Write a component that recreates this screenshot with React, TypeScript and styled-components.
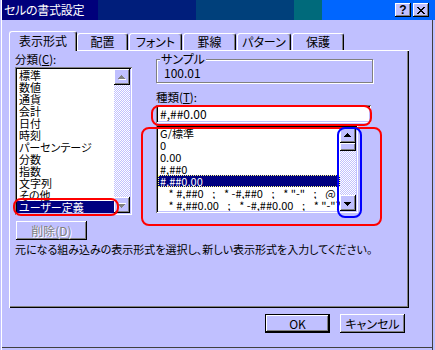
import styled, { createGlobalStyle, css } from 'styled-components';

const face = '#c0c0ff';
const shadow = '#808080';
const navy = '#000080';

const GlobalStyle = createGlobalStyle`
  html, body { margin: 0; padding: 0; background: ${face}; }
  body {
    font-family: "Noto Sans CJK JP", "Noto Sans", sans-serif;
    font-size: 12px;
    font-feature-settings: "palt";
    color: #000;
  }
`;

const raised = css`
  box-shadow: inset -1px -1px #000, inset 1px 1px #fff, inset -2px -2px ${shadow}, inset 2px 2px ${face};
`;

const sunken = css`
  box-shadow: inset 1px 1px ${shadow}, inset -1px -1px #fff, inset 2px 2px #000, inset -2px -2px ${face};
`;

const Window = styled.div`
  position: relative;
  width: 435px;
  height: 350px;
  box-sizing: border-box;
  padding-left: 2px;
  background: ${face};
  display: flex;
  flex-direction: column;
  overflow: hidden;
  box-shadow: inset 1px 0 ${face}, inset 2px 0 #fff, inset -2px 0 ${face}, inset -3px 0 #404040,
    inset 0 -2px ${face}, inset 0 -3px #404040;
`;

const TitleBar = styled.div`
  height: 20px;
  display: flex;
  align-items: center;
  padding: 0 6px 0 2px;
  color: #fff;
  background: linear-gradient(
    to right,
    #00007b 0 96px,
    #001e7b 96px 194px,
    #00407b 194px 292px,
    #006a7b 292px 320px,
    #0066ff 320px
  );
`;

const TitleText = styled.span`
  flex: 1;
  font-size: 12px;
  line-height: 20px;
  letter-spacing: -0.3px;
`;

const CaptionButton = styled.button`
  width: 16px;
  height: 14px;
  margin-left: 2px;
  padding: 0;
  border: none;
  background: ${face};
  ${raised};
  display: flex;
  align-items: center;
  justify-content: center;
  font-family: "Liberation Sans", sans-serif;
  font-weight: bold;
  font-size: 12px;
  line-height: 12px;
  color: #000;
`;

const Body = styled.div`
  display: flex;
  flex-direction: column;
  padding: 11px 0 0 7px;
`;

const TabRow = styled.div`
  display: flex;
  align-items: flex-end;
  gap: 1px;
  height: 19px;
`;

const Tab = styled.div<{ $w: number; $active?: boolean }>`
  position: relative;
  width: ${(p) => p.$w}px;
  height: ${(p) => (p.$active ? 20 : 17)}px;
  margin-bottom: ${(p) => (p.$active ? -1 : 0)}px;
  margin-right: ${(p) => (p.$active ? -1 : 0)}px;
  z-index: ${(p) => (p.$active ? 1 : 0)};
  box-sizing: border-box;
  background: ${face};
  border-top: 1px solid #fff;
  border-left: 1px solid #fff;
  border-right: 1px solid #000;
  border-radius: 3px 3px 0 0;
  box-shadow: inset -1px 0 ${shadow};
  text-align: center;
  font-size: 12px;
  line-height: ${(p) => (p.$active ? 17 : 15)}px;
`;

const Panel = styled.div`
  width: 400px;
  height: 258px;
  box-sizing: border-box;
  border-top: 1px solid #fff;
  border-left: 1px solid #fff;
  box-shadow: inset -1px -1px #000, inset -2px -2px ${shadow};
  padding: 2px 0 0 5px;
  display: flex;
  flex-direction: column;
`;

const Columns = styled.div`
  display: flex;
  gap: 24px;
`;

const Column = styled.div<{ $w: number }>`
  width: ${(p) => p.$w}px;
  display: flex;
  flex-direction: column;
  align-items: flex-start;
`;

const FieldLabel = styled.div<{ $mt?: number }>`
  height: 14px;
  margin-top: ${(p) => p.$mt ?? 0}px;
  line-height: 13px;
  font-size: 11.5px;
  u { text-underline-offset: 1px; }
`;

const ListBox = styled.div<{ $w: number; $h: number }>`
  width: ${(p) => p.$w}px;
  height: ${(p) => p.$h}px;
  box-sizing: border-box;
  padding: 2px;
  background: #fff;
  ${sunken};
  display: flex;
`;

const Rows = styled.div`
  flex: 1;
  min-width: 0;
  display: flex;
  flex-direction: column;
  overflow: hidden;
`;

const Row = styled.div<{ $selected?: boolean; $focus?: boolean }>`
  height: 12px;
  flex: none;
  line-height: 12px;
  font-size: 11px;
  padding-left: 2px;
  white-space: pre;
  overflow: hidden;
  background: ${(p) => (p.$selected ? navy : 'transparent')};
  color: ${(p) => (p.$selected ? '#fff' : '#000')};
  ${(p) =>
    p.$focus &&
    css`
      outline: 1px dotted #ffff80;
      outline-offset: -1px;
    `}
`;

const ScrollBar = styled.div`
  width: 16px;
  display: flex;
  flex-direction: column;
  background: repeating-conic-gradient(#fff 0 25%, ${face} 0 50%) 0 0 / 2px 2px;
`;

const ScrollButton = styled.div`
  width: 16px;
  height: 16px;
  flex: none;
  background: ${face};
  ${raised};
  display: flex;
  align-items: center;
  justify-content: center;
`;

const Thumb = styled.div<{ $h: number }>`
  width: 16px;
  height: ${(p) => p.$h}px;
  background: ${face};
  ${raised};
`;

const Track = styled.div`
  flex: 1;
`;

const PushButton = styled.button<{ $w: number; $default?: boolean }>`
  width: ${(p) => p.$w}px;
  height: 19px;
  padding: 0;
  border: ${(p) => (p.$default ? '1px solid #000' : 'none')};
  box-sizing: border-box;
  background: ${face};
  ${raised};
  font-family: "Noto Sans CJK JP", "Noto Sans", sans-serif;
  font-feature-settings: "palt";
  font-size: 12px;
  line-height: 12px;
  color: #000;
  &:disabled {
    color: ${shadow};
    text-shadow: 1px 1px #fff;
  }
`;

const GroupBox = styled.div`
  width: 217px;
  height: 24px;
  margin-top: 6px;
  box-sizing: border-box;
  border: 1px solid ${shadow};
  box-shadow: 1px 1px 0 #fff, inset 1px 1px 0 #fff;
  display: flex;
  flex-direction: column;
  align-items: flex-start;
`;

const Legend = styled.span`
  margin: -7px 0 0 3px;
  padding: 0 1px;
  background: ${face};
  font-size: 12px;
  line-height: 12px;
`;

const SampleValue = styled.span`
  margin: 2px 0 0 7px;
  font-size: 12px;
  line-height: 12px;
`;

const TextBox = styled.div`
  width: 215px;
  height: 18px;
  box-sizing: border-box;
  padding: 2px 0 0 4px;
  background: #fff;
  ${sunken};
  font-size: 12px;
  line-height: 13px;
`;

const Hint = styled.div`
  margin-top: 2px;
  font-size: 11px;
  line-height: 14px;
  white-space: nowrap;
`;

const ButtonRow = styled.div`
  display: flex;
  justify-content: flex-end;
  gap: 10px;
  margin-top: 6px;
  padding-right: 30px;
`;

const Ring = styled.div<{ $x: number; $y: number; $w: number; $h: number; $color: string }>`
  position: absolute;
  left: ${(p) => p.$x}px;
  top: ${(p) => p.$y}px;
  width: ${(p) => p.$w}px;
  height: ${(p) => p.$h}px;
  box-sizing: border-box;
  border: 2px solid ${(p) => p.$color};
  border-radius: 8px;
  pointer-events: none;
`;

const Arrow = ({ down, disabled }: { down?: boolean; disabled?: boolean }) => {
  const d = 'M3 0h1v1h-1zM2 1h3v1h-3zM1 2h5v1h-5zM0 3h7v1h-7z';
  return (
    <svg width="8" height="5" viewBox="0 0 8 5" shapeRendering="crispEdges"
      style={{ transform: down ? 'scaleY(-1)' : undefined }}>
      {disabled && <path d={d} fill="#fff" transform="translate(1 1)" />}
      <path d={d} fill={disabled ? shadow : '#000'} />
    </svg>
  );
};

const CloseIcon = () => (
  <svg width="8" height="7" viewBox="0 0 8 7" shapeRendering="crispEdges">
    <path
      d="M0 0h2v1H0zM6 0h2v1H6zM1 1h2v1H1zM5 1h2v1H5zM2 2h4v1H2zM3 3h2v1H3zM2 4h4v1H2zM1 5h2v1H1zM5 5h2v1H5zM0 6h2v1H0zM6 6h2v1H6z"
      fill="#000"
    />
  </svg>
);

const categories = [
  '標準', '数値', '通貨', '会計', '日付', '時刻', 'パーセンテージ',
  '分数', '指数', '文字列', 'その他', 'ユーザー定義',
];

const formats = [
  'G/標準',
  '0',
  '0.00',
  '#,##0',
  '#,##0.00',
  '_ * #,##0_ ;_ * -#,##0_ ;_ * "-"_ ;_ @_ ',
  '_ * #,##0.00_ ;_ * -#,##0.00_ ;_ * "-"??_ ;_ @_ ',
];

const tabs = [
  { label: '表示形式', w: 68 },
  { label: '配置', w: 51 },
  { label: 'フォント', w: 53 },
  { label: '罫線', w: 53 },
  { label: 'パターン', w: 54 },
  { label: '保護', w: 52 },
];

export default function App() {
  return (
    <>
      <GlobalStyle />
      <Window>
        <TitleBar>
          <TitleText>セルの書式設定</TitleText>
          <CaptionButton>?</CaptionButton>
          <CaptionButton>
            <CloseIcon />
          </CaptionButton>
        </TitleBar>
        <Body>
          <TabRow>
            {tabs.map((t, i) => (
              <Tab key={t.label} $w={t.w} $active={i === 0}>
                {t.label}
              </Tab>
            ))}
          </TabRow>
          <Panel>
            <Columns>
              <Column $w={117}>
                <FieldLabel>
                  分類(<u>C</u>):
                </FieldLabel>
                <ListBox $w={117} $h={148}>
                  <Rows>
                    {categories.map((c, i) => (
                      <Row key={c} $selected={i === categories.length - 1}>
                        {c}
                      </Row>
                    ))}
                  </Rows>
                  <ScrollBar>
                    <ScrollButton>
                      <Arrow disabled />
                    </ScrollButton>
                    <Track />
                    <ScrollButton>
                      <Arrow down disabled />
                    </ScrollButton>
                  </ScrollBar>
                </ListBox>
                <PushButton $w={71} disabled style={{ marginTop: 6, marginLeft: 1 }}>
                  削除(D)
                </PushButton>
              </Column>
              <Column $w={217}>
                <GroupBox>
                  <Legend>サンプル</Legend>
                  <SampleValue>100.01</SampleValue>
                </GroupBox>
                <FieldLabel $mt={8}>
                  種類(<u>T</u>):
                </FieldLabel>
                <TextBox>#,##0.00</TextBox>
                <ListBox $w={202} $h={88} style={{ marginTop: 2 }}>
                  <Rows>
                    {formats.map((f, i) => (
                      <Row key={f} $selected={i === 4} $focus={i === 4}>
                        {f}
                      </Row>
                    ))}
                  </Rows>
                  <ScrollBar>
                    <ScrollButton>
                      <Arrow />
                    </ScrollButton>
                    <Thumb $h={8} />
                    <Track />
                    <ScrollButton>
                      <Arrow down />
                    </ScrollButton>
                  </ScrollBar>
                </ListBox>
              </Column>
            </Columns>
            <Hint>元になる組み込みの表示形式を選択し、新しい表示形式を入力してください。</Hint>
          </Panel>
          <ButtonRow>
            <PushButton $w={65} $default>
              OK
            </PushButton>
            <PushButton $w={65}>キャンセル</PushButton>
          </ButtonRow>
        </Body>
        <Ring $x={13} $y={198} $w={106} $h={18} $color="#ff0000" />
        <Ring $x={151} $y={105} $w={221} $h={21} $color="#ff0000" />
        <Ring $x={141} $y={127} $w={241} $h={99} $color="#ff0000" />
        <Ring $x={337} $y={127} $w={25} $h={91} $color="#0000ff" />
      </Window>
    </>
  );
}
